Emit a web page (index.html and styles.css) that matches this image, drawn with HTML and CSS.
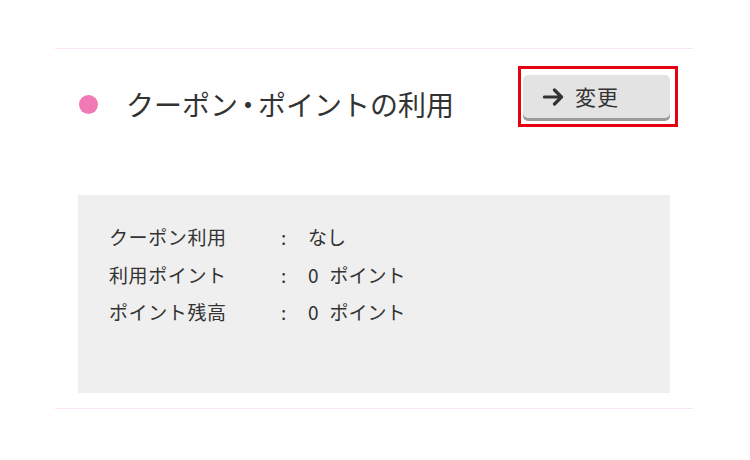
FILE: index.html
```html
<!DOCTYPE html>
<html lang="ja">
<head>
<meta charset="utf-8">
<title>クーポン・ポイントの利用</title>
<link rel="stylesheet" href="styles.css">
</head>
<body>
<section class="section">
  <div class="header">
    <div class="title-wrap">
      <span class="dot"></span>
      <h2 class="title">クーポン<span class="sep">・</span>ポイントの利用</h2>
    </div>
    <div class="btn-frame">
      <button class="btn" type="button">
        <svg class="arrow" width="22" height="18" viewBox="0 0 22 18" aria-hidden="true"><path d="M1.5 9H18.5M11.5 2L18.5 9L11.5 16" fill="none" stroke="#333" stroke-width="3.2" stroke-linecap="round" stroke-linejoin="round"/></svg>
        <span class="btn-label">変更</span>
      </button>
    </div>
  </div>
  <div class="info">
    <dl class="rows">
      <dt class="label">クーポン利用</dt><dd class="colon">:</dd><dd class="value">なし</dd>
      <dt class="label">利用ポイント</dt><dd class="colon">:</dd><dd class="value"><span class="num">0</span>ポイント</dd>
      <dt class="label">ポイント残高</dt><dd class="colon">:</dd><dd class="value"><span class="num">0</span>ポイント</dd>
    </dl>
  </div>
</section>
</body>
</html>
```
FILE: styles.css
```css
* { box-sizing: border-box; }
html, body { margin: 0; padding: 0; background: #fff; }
body {
  font-family: "Noto Sans CJK JP", "Noto Sans", sans-serif;
  color: #333;
}
.section {
  width: 638px;
  margin: 48px 0 0 55px;
  border-top: 1px solid #fde2f6;
  border-bottom: 1px solid #fde2f6;
}
.header {
  height: 146px;
  display: flex;
  justify-content: space-between;
  align-items: flex-start;
  padding: 17px 15px 0 24px;
}
.title-wrap {
  display: flex;
  align-items: center;
  margin-top: 23px;
  height: 30px;
}
.dot {
  width: 19px;
  height: 19px;
  border-radius: 50%;
  background: #f07ab6;
  margin-right: 28px;
  flex: none;
}
.title {
  margin: 0;
  font-size: 28px;
  font-weight: normal;
  line-height: 30px;
  letter-spacing: 0;
  color: #333;
}
.sep {
  font-feature-settings: "halt";
  padding: 0 3px;
}
.btn-frame {
  border: 3px solid #e60012;
  padding: 6px 5px 3px 2px;
  width: 160px;
  height: 61px;
}
.btn {
  display: flex;
  align-items: center;
  width: 147px;
  height: 43px;
  padding: 0 0 0 20px;
  border: none;
  border-radius: 5px;
  background: #e3e3e3;
  box-shadow: 0 3px 0 #9b9b9b;
  font-family: inherit;
  color: #333;
  cursor: pointer;
}
.arrow { flex: none; margin-right: 10px; }
.btn-label {
  font-size: 21px;
  line-height: 1;
  letter-spacing: 1px;
}
.info {
  margin: 0 23px 15px;
  height: 198px;
  background: #efefef;
  padding: 23px 0 0 31px;
}
.rows {
  margin: 0;
  display: grid;
  grid-template-columns: 172px 27px auto;
  font-size: 19px;
  line-height: 37.5px;
  letter-spacing: 0.6px;
}
.rows dt, .rows dd { margin: 0; }
.rows .value { letter-spacing: 0; }
.num { margin-right: 11px; }
```
